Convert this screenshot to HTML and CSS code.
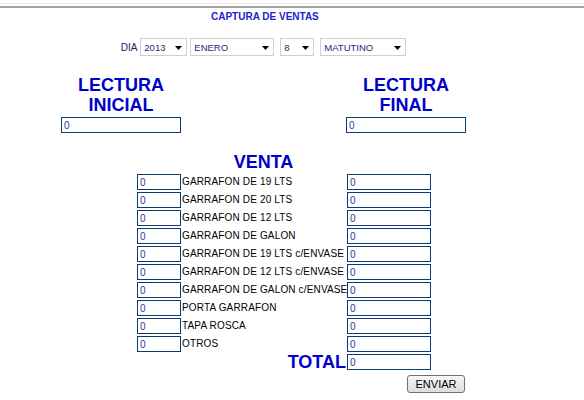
FILE: index.html
```html
<!DOCTYPE html>
<html lang="es">
<head>
<meta charset="utf-8">
<title>Captura de ventas</title>
<link rel="stylesheet" href="styles.css">
</head>
<body>
<div class="topbar"></div>
<div class="page">
  <div class="title">CAPTURA DE VENTAS</div>
  <div class="date-row">
    <span class="dia">DIA</span>
    <div class="sel sel-year"><span>2013</span><svg class="arrow" width="7" height="4" viewBox="0 0 7 4"><path d="M0 0H7L3.5 4Z" fill="#000"/></svg></div>
    <div class="sel sel-month"><span>ENERO</span><svg class="arrow" width="7" height="4" viewBox="0 0 7 4"><path d="M0 0H7L3.5 4Z" fill="#000"/></svg></div>
    <div class="sel sel-day"><span>8</span><svg class="arrow" width="7" height="4" viewBox="0 0 7 4"><path d="M0 0H7L3.5 4Z" fill="#000"/></svg></div>
    <div class="sel sel-turn"><span>MATUTINO</span><svg class="arrow" width="7" height="4" viewBox="0 0 7 4"><path d="M0 0H7L3.5 4Z" fill="#000"/></svg></div>
  </div>

  <div class="lecturas">
    <div class="lectura">
      <div class="big">LECTURA<br>INICIAL</div>
      <input class="field field-wide" type="text" value="0">
    </div>
    <div></div>
    <div class="lectura">
      <div class="big">LECTURA<br>FINAL</div>
      <input class="field field-wide" type="text" value="0">
    </div>
  </div>

  <div class="big venta">VENTA</div>

  <div class="rows">
    <input class="field field-s" type="text" value="0"><span class="label">GARRAFON DE 19 LTS</span><input class="field field-m" type="text" value="0">
    <input class="field field-s" type="text" value="0"><span class="label">GARRAFON DE 20 LTS</span><input class="field field-m" type="text" value="0">
    <input class="field field-s" type="text" value="0"><span class="label">GARRAFON DE 12 LTS</span><input class="field field-m" type="text" value="0">
    <input class="field field-s" type="text" value="0"><span class="label">GARRAFON DE GALON</span><input class="field field-m" type="text" value="0">
    <input class="field field-s" type="text" value="0"><span class="label">GARRAFON DE 19 LTS c/ENVASE</span><input class="field field-m" type="text" value="0">
    <input class="field field-s" type="text" value="0"><span class="label">GARRAFON DE 12 LTS c/ENVASE</span><input class="field field-m" type="text" value="0">
    <input class="field field-s" type="text" value="0"><span class="label">GARRAFON DE GALON c/ENVASE</span><input class="field field-m" type="text" value="0">
    <input class="field field-s" type="text" value="0"><span class="label">PORTA GARRAFON</span><input class="field field-m" type="text" value="0">
    <input class="field field-s" type="text" value="0"><span class="label">TAPA ROSCA</span><input class="field field-m" type="text" value="0">
    <input class="field field-s" type="text" value="0"><span class="label">OTROS</span><input class="field field-m" type="text" value="0">
    <span></span><span class="big total">TOTAL</span><input class="field field-m" type="text" value="0">
    <span></span><span></span><button class="btn" type="button">ENVIAR</button>
  </div>
</div>
</body>
</html>
```

FILE: styles.css
```css
html, body {
  margin: 0;
  padding: 0;
  background: #ffffff;
}

body {
  font-family: "Liberation Sans", Arial, sans-serif;
  width: 584px;
  height: 400px;
  overflow: hidden;
}

.topbar {
  margin-top: 3px;
  height: 2px;
  border-top: 1px solid #ececec;
  border-bottom: 2px solid #a3a3a3;
}

.page {
  margin-left: 61px;
  width: 405px;
}

.title {
  margin-top: 3px;
  padding-left: 150px;
  font-size: 10px;
  line-height: 11px;
  font-weight: bold;
  color: #2222cc;
}

.date-row {
  margin-top: 16px;
  display: flex;
  justify-content: center;
  align-items: center;
  height: 18px;
}

.dia {
  font-size: 10px;
  color: #1a1a60;
  margin-right: 3px;
}

.sel {
  box-sizing: border-box;
  height: 18px;
  border: 1px solid #cfcfcf;
  display: flex;
  align-items: center;
  justify-content: space-between;
  padding: 0 4px 0 3px;
  font-size: 9.5px;
  color: #1a2a8a;
  background: #fff;
}

.sel-year { width: 47px; margin-right: 3px; }
.sel-month { width: 84px; margin-right: 6px; }
.sel-day { width: 34px; margin-right: 6px; }
.sel-turn { width: 86px; }

.arrow {
  display: block;
  margin-top: 1px;
}

.lecturas {
  margin-top: 19px;
  display: grid;
  grid-template-columns: 120px 165px 120px;
}

.lectura {
  display: flex;
  flex-direction: column;
  align-items: center;
}

.big {
  font-size: 18px;
  line-height: 20px;
  font-weight: bold;
  color: #0000cc;
  text-align: center;
}

.field {
  box-sizing: border-box;
  height: 16px;
  margin: 0;
  border: 1px solid #0a3a78;
  padding: 0 2px;
  font-family: "Liberation Sans", Arial, sans-serif;
  font-size: 10px;
  color: #333399;
  background: #fff;
  outline: none;
}

.field-wide {
  width: 120px;
  margin-top: 2px;
}

.venta {
  margin-top: 19px;
}

.rows {
  margin-top: 2px;
  display: grid;
  grid-template-columns: 120px 165px 120px;
  row-gap: 2px;
  align-items: center;
}

.field-s {
  width: 44px;
  justify-self: end;
}

.field-m {
  width: 84px;
  justify-self: start;
  margin-left: 1px;
}

.label {
  font-size: 10px;
  line-height: 16px;
  letter-spacing: 0.15px;
  color: #000;
  padding-left: 1px;
  white-space: nowrap;
}

.total {
  text-align: right;
  height: 16px;
  line-height: 16px;
}

.btn {
  justify-self: end;
  margin-right: 1px;
  margin-top: 3px;
  width: 58px;
  height: 18px;
  padding: 0;
  border: 1px solid #707070;
  border-radius: 3px;
  background: linear-gradient(#f6f6f6, #dddddd);
  font-family: "Liberation Sans", Arial, sans-serif;
  font-size: 11px;
  color: #000;
}
```
